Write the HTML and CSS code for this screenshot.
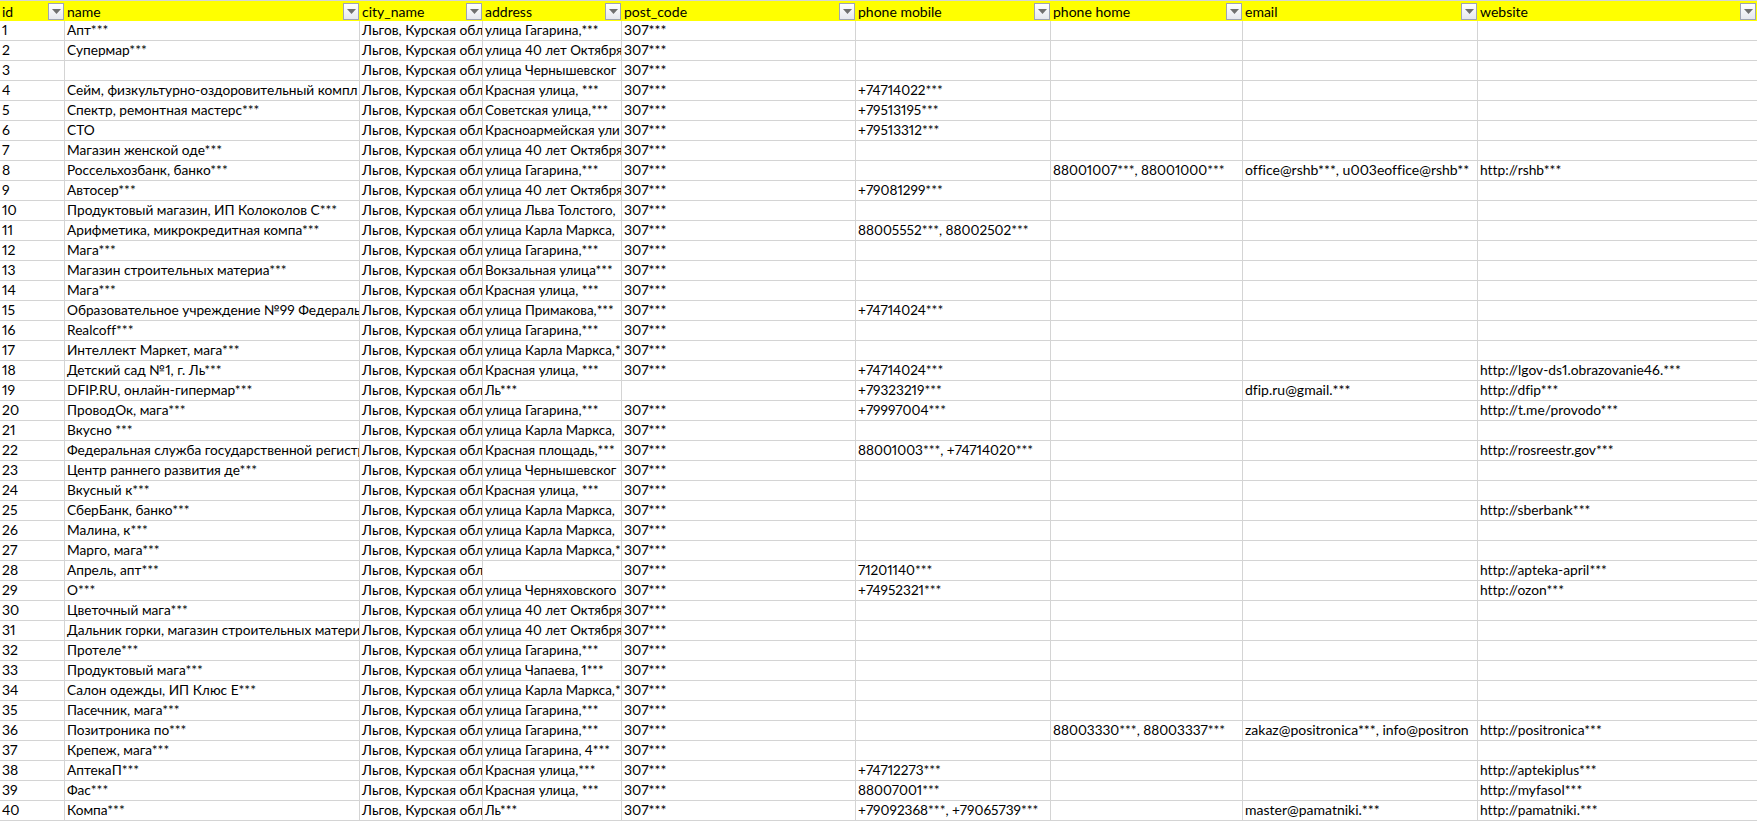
FILE: index.html
```html
<!DOCTYPE html>
<html lang="ru">
<head>
<meta charset="utf-8">
<title>Таблица организаций</title>
<link rel="stylesheet" href="styles.css">
</head>
<body>
<table class="sheet">
<colgroup><col class="c-id"><col class="c-name"><col class="c-city"><col class="c-addr"><col class="c-post"><col class="c-mob"><col class="c-home"><col class="c-mail"><col class="c-web"></colgroup>
<thead><tr>
<th><div class="head"><span>id</span><i class="filter"><svg viewBox="0 0 9 5" width="9" height="5"><path d="M0 0h9L4.500 5z"/></svg></i></div></th>
<th><div class="head"><span>name</span><i class="filter"><svg viewBox="0 0 9 5" width="9" height="5"><path d="M0 0h9L4.500 5z"/></svg></i></div></th>
<th><div class="head"><span>city_name</span><i class="filter"><svg viewBox="0 0 9 5" width="9" height="5"><path d="M0 0h9L4.500 5z"/></svg></i></div></th>
<th><div class="head"><span>address</span><i class="filter"><svg viewBox="0 0 9 5" width="9" height="5"><path d="M0 0h9L4.500 5z"/></svg></i></div></th>
<th><div class="head"><span>post_code</span><i class="filter"><svg viewBox="0 0 9 5" width="9" height="5"><path d="M0 0h9L4.500 5z"/></svg></i></div></th>
<th><div class="head"><span>phone mobile</span><i class="filter"><svg viewBox="0 0 9 5" width="9" height="5"><path d="M0 0h9L4.500 5z"/></svg></i></div></th>
<th><div class="head"><span>phone home</span><i class="filter"><svg viewBox="0 0 9 5" width="9" height="5"><path d="M0 0h9L4.500 5z"/></svg></i></div></th>
<th><div class="head"><span>email</span><i class="filter"><svg viewBox="0 0 9 5" width="9" height="5"><path d="M0 0h9L4.500 5z"/></svg></i></div></th>
<th><div class="head"><span>website</span><i class="filter"><svg viewBox="0 0 9 5" width="9" height="5"><path d="M0 0h9L4.500 5z"/></svg></i></div></th>
</tr></thead>
<tbody>
<tr><td>1</td><td>Апт***</td><td>Льгов, Курская обл</td><td>улица Гагарина,***</td><td>307***</td><td></td><td></td><td></td><td></td></tr>
<tr><td>2</td><td>Супермар***</td><td>Льгов, Курская обл</td><td>улица 40 лет Октября</td><td>307***</td><td></td><td></td><td></td><td></td></tr>
<tr><td>3</td><td></td><td>Льгов, Курская обл</td><td>улица Чернышевског</td><td>307***</td><td></td><td></td><td></td><td></td></tr>
<tr><td>4</td><td>Сейм, физкультурно-оздоровительный компл</td><td>Льгов, Курская обл</td><td>Красная улица, ***</td><td>307***</td><td>+74714022***</td><td></td><td></td><td></td></tr>
<tr><td>5</td><td>Спектр, ремонтная мастерс***</td><td>Льгов, Курская обл</td><td>Советская улица,***</td><td>307***</td><td>+79513195***</td><td></td><td></td><td></td></tr>
<tr><td>6</td><td>СТО</td><td>Льгов, Курская обл</td><td>Красноармейская ули</td><td>307***</td><td>+79513312***</td><td></td><td></td><td></td></tr>
<tr><td>7</td><td>Магазин женской оде***</td><td>Льгов, Курская обл</td><td>улица 40 лет Октября</td><td>307***</td><td></td><td></td><td></td><td></td></tr>
<tr><td>8</td><td>Россельхозбанк, банко***</td><td>Льгов, Курская обл</td><td>улица Гагарина,***</td><td>307***</td><td></td><td>88001007***, 88001000***</td><td>office@rshb***, u003eoffice@rshb**</td><td>http://rshb***</td></tr>
<tr><td>9</td><td>Автосер***</td><td>Льгов, Курская обл</td><td>улица 40 лет Октября</td><td>307***</td><td>+79081299***</td><td></td><td></td><td></td></tr>
<tr><td>10</td><td>Продуктовый магазин, ИП Колоколов С***</td><td>Льгов, Курская обл</td><td>улица Льва Толстого,</td><td>307***</td><td></td><td></td><td></td><td></td></tr>
<tr><td>11</td><td>Арифметика, микрокредитная компа***</td><td>Льгов, Курская обл</td><td>улица Карла Маркса,</td><td>307***</td><td>88005552***, 88002502***</td><td></td><td></td><td></td></tr>
<tr><td>12</td><td>Мага***</td><td>Льгов, Курская обл</td><td>улица Гагарина,***</td><td>307***</td><td></td><td></td><td></td><td></td></tr>
<tr><td>13</td><td>Магазин строительных материа***</td><td>Льгов, Курская обл</td><td>Вокзальная улица***</td><td>307***</td><td></td><td></td><td></td><td></td></tr>
<tr><td>14</td><td>Мага***</td><td>Льгов, Курская обл</td><td>Красная улица, ***</td><td>307***</td><td></td><td></td><td></td><td></td></tr>
<tr><td>15</td><td>Образовательное учреждение №99 Федераль</td><td>Льгов, Курская обл</td><td>улица Примакова,***</td><td>307***</td><td>+74714024***</td><td></td><td></td><td></td></tr>
<tr><td>16</td><td>Realcoff***</td><td>Льгов, Курская обл</td><td>улица Гагарина,***</td><td>307***</td><td></td><td></td><td></td><td></td></tr>
<tr><td>17</td><td>Интеллект Маркет, мага***</td><td>Льгов, Курская обл</td><td>улица Карла Маркса,*</td><td>307***</td><td></td><td></td><td></td><td></td></tr>
<tr><td>18</td><td>Детский сад №1, г. Ль***</td><td>Льгов, Курская обл</td><td>Красная улица, ***</td><td>307***</td><td>+74714024***</td><td></td><td></td><td>http://lgov-ds1.obrazovanie46.***</td></tr>
<tr><td>19</td><td>DFIP.RU, онлайн-гипермар***</td><td>Льгов, Курская обл</td><td>Ль***</td><td></td><td>+79323219***</td><td></td><td>dfip.ru@gmail.***</td><td>http://dfip***</td></tr>
<tr><td>20</td><td>ПроводОк, мага***</td><td>Льгов, Курская обл</td><td>улица Гагарина,***</td><td>307***</td><td>+79997004***</td><td></td><td></td><td>http://t.me/provodo***</td></tr>
<tr><td>21</td><td>Вкусно ***</td><td>Льгов, Курская обл</td><td>улица Карла Маркса,</td><td>307***</td><td></td><td></td><td></td><td></td></tr>
<tr><td>22</td><td>Федеральная служба государственной регистр</td><td>Льгов, Курская обл</td><td>Красная площадь,***</td><td>307***</td><td>88001003***, +74714020***</td><td></td><td></td><td>http://rosreestr.gov***</td></tr>
<tr><td>23</td><td>Центр раннего развития де***</td><td>Льгов, Курская обл</td><td>улица Чернышевског</td><td>307***</td><td></td><td></td><td></td><td></td></tr>
<tr><td>24</td><td>Вкусный к***</td><td>Льгов, Курская обл</td><td>Красная улица, ***</td><td>307***</td><td></td><td></td><td></td><td></td></tr>
<tr><td>25</td><td>СберБанк, банко***</td><td>Льгов, Курская обл</td><td>улица Карла Маркса,</td><td>307***</td><td></td><td></td><td></td><td>http://sberbank***</td></tr>
<tr><td>26</td><td>Малина, к***</td><td>Льгов, Курская обл</td><td>улица Карла Маркса,</td><td>307***</td><td></td><td></td><td></td><td></td></tr>
<tr><td>27</td><td>Марго, мага***</td><td>Льгов, Курская обл</td><td>улица Карла Маркса,*</td><td>307***</td><td></td><td></td><td></td><td></td></tr>
<tr><td>28</td><td>Апрель, апт***</td><td>Льгов, Курская обл</td><td></td><td>307***</td><td>71201140***</td><td></td><td></td><td>http://apteka-april***</td></tr>
<tr><td>29</td><td>О***</td><td>Льгов, Курская обл</td><td>улица Черняховского</td><td>307***</td><td>+74952321***</td><td></td><td></td><td>http://ozon***</td></tr>
<tr><td>30</td><td>Цветочный мага***</td><td>Льгов, Курская обл</td><td>улица 40 лет Октября</td><td>307***</td><td></td><td></td><td></td><td></td></tr>
<tr><td>31</td><td>Дальник горки, магазин строительных матери</td><td>Льгов, Курская обл</td><td>улица 40 лет Октября</td><td>307***</td><td></td><td></td><td></td><td></td></tr>
<tr><td>32</td><td>Протеле***</td><td>Льгов, Курская обл</td><td>улица Гагарина,***</td><td>307***</td><td></td><td></td><td></td><td></td></tr>
<tr><td>33</td><td>Продуктовый мага***</td><td>Льгов, Курская обл</td><td>улица Чапаева, 1***</td><td>307***</td><td></td><td></td><td></td><td></td></tr>
<tr><td>34</td><td>Салон одежды, ИП Клюс Е***</td><td>Льгов, Курская обл</td><td>улица Карла Маркса,*</td><td>307***</td><td></td><td></td><td></td><td></td></tr>
<tr><td>35</td><td>Пасечник, мага***</td><td>Льгов, Курская обл</td><td>улица Гагарина,***</td><td>307***</td><td></td><td></td><td></td><td></td></tr>
<tr><td>36</td><td>Позитроника по***</td><td>Льгов, Курская обл</td><td>улица Гагарина,***</td><td>307***</td><td></td><td>88003330***, 88003337***</td><td>zakaz@positronica***, info@positron</td><td>http://positronica***</td></tr>
<tr><td>37</td><td>Крепеж, мага***</td><td>Льгов, Курская обл</td><td>улица Гагарина, 4***</td><td>307***</td><td></td><td></td><td></td><td></td></tr>
<tr><td>38</td><td>АптекаП***</td><td>Льгов, Курская обл</td><td>Красная улица,***</td><td>307***</td><td>+74712273***</td><td></td><td></td><td>http://aptekiplus***</td></tr>
<tr><td>39</td><td>Фас***</td><td>Льгов, Курская обл</td><td>Красная улица, ***</td><td>307***</td><td>88007001***</td><td></td><td></td><td>http://myfasol***</td></tr>
<tr><td>40</td><td>Компа***</td><td>Льгов, Курская обл</td><td>Ль***</td><td>307***</td><td>+79092368***, +79065739***</td><td></td><td>master@pamatniki.***</td><td>http://pamatniki.***</td></tr>
</tbody>
</table>
</body>
</html>
```
FILE: styles.css
```css
html, body { margin: 0; padding: 0; background: #fff; overflow: hidden; }
.sheet {
  table-layout: fixed;
  border-collapse: separate;
  border-spacing: 0;
  width: 1757px;
  font-family: "Lato", "Liberation Sans", sans-serif;
  font-size: 14px;
  font-variant-ligatures: none;
  font-variant-numeric: proportional-nums;
  color: #000;
}
.c-id { width: 65px; }
.c-name { width: 295px; }
.c-city { width: 123px; }
.c-addr { width: 139px; }
.c-post { width: 234px; }
.c-mob { width: 195px; }
.c-home { width: 192px; }
.c-mail { width: 235px; }
.c-web { width: 279px; }
th {
  height: 21px;
  box-sizing: border-box;
  padding: 0;
  background: #ffff00;
  border-top: 1px solid #d4d4d4;
  font-weight: 400;
  text-align: left;
  overflow: hidden;
}
.head {
  display: flex;
  align-items: center;
  justify-content: space-between;
  height: 20px;
  padding: 0 1px 0 2px;
}
.head span { white-space: nowrap; }
.filter {
  display: flex;
  align-items: center;
  justify-content: center;
  box-sizing: border-box;
  width: 16px;
  height: 17px;
  border: 1px solid #9ea4b4;
  background: linear-gradient(#ffffff, #e6e8ee);
}
.filter svg { fill: #6f6f6f; display: block; }
td {
  height: 20px;
  box-sizing: border-box;
  padding: 0 0 1px 2px;
  border-right: 1px solid #d4d4d4;
  border-bottom: 1px solid #d4d4d4;
  white-space: nowrap;
  overflow: hidden;
  line-height: 18px;
  vertical-align: bottom;
}
td:nth-child(2) { font-size: 13.7px; }
td:nth-child(3) { font-size: 13.8px; }
td:nth-child(4) { font-size: 13.4px; }
td:nth-child(6), td:nth-child(7) { font-size: 13.6px; }
td:nth-child(9) { font-size: 13.8px; }
td:last-child { border-right: 0; }
```
